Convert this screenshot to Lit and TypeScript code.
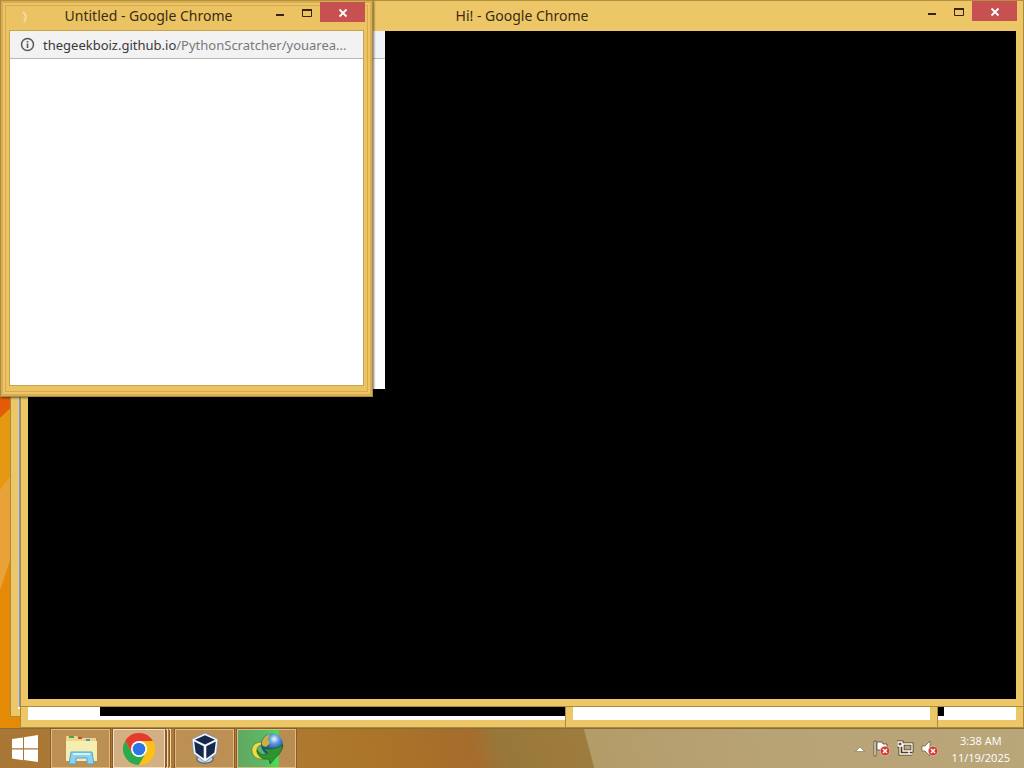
import { LitElement, html, css, svg } from "lit";
import { customElement, property } from "lit/decorators.js";

const flagX = svg`<circle cx="12" cy="11" r="4.800" fill="#cf3a34" stroke="#f3d9c8" stroke-width=".6"/><path d="M10 9l4 4m0-4l-4 4" stroke="#fff" stroke-width="1.500"/>`;

@customElement("desktop-window")
export class DesktopWindow extends LitElement {
  @property() heading = "";
  @property({ type: Boolean, reflect: true }) front = false;

  static styles = css`
    :host {
      box-sizing: border-box;
      display: flex;
      flex-direction: column;
      padding: 0 7px 7px;
      background: #edc767;
      border: 1px solid #a98a41;
      border-top-color: #b3903f;
      font-family: "Noto Sans", "Open Sans", sans-serif;
      color: #3a2c14;
    }
    :host([front]) {
      padding: 0 9px 11px;
      background: #ebc363;
    }
    .bar {
      display: flex;
      height: 30px;
      flex: none;
      position: relative;
    }
    .title {
      flex: 1;
      margin: 0;
      text-align: center;
      font-size: 14px;
      font-weight: 400;
      line-height: 29px;
      white-space: nowrap;
    }
    :host([front]) .title {
      padding: 0 96px 0 20px;
      line-height: 30px;
    }
    .controls {
      position: absolute;
      right: -1px;
      top: 0;
      display: flex;
    }
    button {
      display: grid;
      place-items: center;
      width: 27px;
      height: 20px;
      padding: 0;
      border: 0;
      background: none;
    }
    .close {
      width: 45px;
      background: #c75050;
    }
    :host([front]) .controls {
      right: -2px;
      top: 1px;
    }
    .spinner {
      position: absolute;
      left: 10px;
      top: 10px;
    }
    .body {
      flex: 1;
      min-height: 0;
      display: flex;
      flex-direction: column;
      overflow: hidden;
      background: #fff;
    }
    :host([front]) .body {
      outline: 1px solid #c9a34e;
    }
  `;

  render() {
    return html`
      ${this.heading
        ? html`<header class="bar">
            ${this.front
              ? html`<svg class="spinner" width="10" height="12"><path d="M3 1q5 4 1 10" fill="none" stroke="#f0d9b5" stroke-width="2"/></svg>`
              : ""}
            <h2 class="title">${this.heading}</h2>
            <div class="controls">
              <button aria-label="Minimize"><svg width="27" height="20"><path d="M10 13h8" stroke="#3a220c" stroke-width="2"/></svg></button>
              <button aria-label="Maximize"><svg width="27" height="20"><path d="M9.500 7v7.500h9v-7.500" fill="none" stroke="#3a220c"/><path d="M9 8h10" stroke="#3a220c" stroke-width="2"/></svg></button>
              <button class="close" aria-label="Close"><svg width="45" height="20"><path d="M19.500 7.500l7 7m0-7l-7 7" stroke="#fff" stroke-width="1.800"/></svg></button>
            </div>
          </header>`
        : ""}
      <div class="body"><slot></slot></div>
    `;
  }
}

@customElement("app-root")
export class AppRoot extends LitElement {
  static styles = css`
    :host {
      display: flex;
      flex-direction: column;
      height: 100vh;
      overflow: hidden;
      font-family: "Open Sans", sans-serif;
    }
    .desktop {
      flex: 1;
      position: relative;
      overflow: hidden;
      background: linear-gradient(115deg, #e58a06 0 50%, #e08800);
    }
    .wallpaper {
      position: absolute;
      left: 0;
      top: 0;
      width: 30px;
      height: 100%;
    }
    desktop-window {
      position: absolute;
    }
    .left { left: 10px; top: 20px; width: 500px; bottom: 11px; }
    .wide { left: 20px; right: 0; top: 20px; bottom: 0; }
    .small { left: 565px; width: 373px; height: 330px; bottom: 0; }
    .main { left: 20px; right: 0; top: 0; bottom: 21px; }
    .popup {
      left: 0;
      top: 0;
      width: 373px;
      height: 397px;
      box-shadow: 1px 1px 2px #0008, inset 0 0 0 2px #d9ae50, inset 0 0 0 4px #edc568, inset 0 0 0 5px #d6ab4e;
    }
    .backing {
      flex: 1;
      margin-bottom: 2px;
      background: #8f96a6;
      border-left: 1px solid #c8c9cc;
    }
    .hollow {
      flex: 1;
      margin: 0 72px 4px;
      background: #000;
    }
    .screen {
      flex: 1;
      background: #000;
    }
    .page {
      width: 357px;
      height: 358px;
      background: #fff;
    }
    .strip {
      height: 27px;
      background: #f0f3f8;
      border-bottom: 1px solid #b9bcc1;
    }
    .address {
      display: flex;
      align-items: center;
      gap: 8px;
      height: 27px;
      padding: 0 10px;
      background: #f2f2f3;
      border-bottom: 1px solid #b7b7b7;
      font-size: 13px;
      color: #77797c;
      white-space: nowrap;
    }
    .address b {
      font-weight: 400;
      color: #37393c;
    }
    .taskbar {
      position: relative;
      flex: none;
      box-sizing: border-box;
      display: flex;
      height: 40px;
      border-top: 1px solid #8a6c38;
      background: linear-gradient(75deg, #a97735 0, #b07c36 25%, #ac7628 35%, #a66c2c 46%, #98783a 49%, #9e7c3e 57.400%, #b49c69 57.500%, #b8a375 75%, #b9a679);
    }
    .taskbar button {
      box-sizing: border-box;
      display: grid;
      place-items: center;
      padding: 0;
      width: 59px;
      height: 39px;
      border: 1px solid #dfbb84;
      outline: 1px solid #8b5c2a;
      outline-offset: 0;
      background: #bc8f52;
    }
    .taskbar .start {
      width: 51px;
      border: 0;
      outline: 0;
      background: none;
    }
    .taskbar .active {
      background: #d3b083;
      border-color: #f3dfc4;
    }
    .taskbar .chrome {
      width: 52px;
    }
    .stack {
      display: flex;
      gap: 1px;
      margin: 0 4px 0 3px;
    }
    .stack i {
      width: 2px;
      border: solid #f0d8b8;
      border-width: 1px 1px 1px 0;
      box-sizing: border-box;
      background: #8b5c2a;
    }
    .taskbar .load {
      margin-left: 3px;
      background: linear-gradient(90deg, #62a862 0, #5bb865 45%, #45e055 70%, #b98d52 73%);
    }
    .tray {
      display: flex;
      align-items: center;
      gap: 7px;
      margin-left: auto;
      padding-right: 14px;
    }
    .clock {
      margin-left: 7px;
      text-align: center;
      color: #fff;
      font-size: 11px;
      line-height: 17px;
    }
  `;

  render() {
    return html`
      <main class="desktop">
        <svg class="wallpaper" viewBox="0 0 30 728" preserveAspectRatio="none">
          <path d="M0 380h30V390L0 418z" fill="#e45b08"/>
          <path d="M0 418L30 390V500L0 590z" fill="#e59812"/>
          <path d="M0 490L30 450V500L0 590z" fill="#e9a23a"/>
        </svg>
        <desktop-window class="left"><div class="backing"></div></desktop-window>
        <desktop-window class="wide"><div class="hollow"></div></desktop-window>
        <desktop-window class="small"></desktop-window>
        <desktop-window class="main" heading="Hi! - Google Chrome">
          <div class="screen"><div class="page"><div class="strip"></div></div></div>
        </desktop-window>
        <desktop-window class="popup" front heading="Untitled - Google Chrome">
          <div class="address">
            <svg width="15" height="15" viewBox="0 0 15 15"><circle cx="7.500" cy="7.500" r="6" fill="none" stroke="#55575a" stroke-width="1.500"/><path d="M7.500 6.500v4.500M7.500 4v1.500" stroke="#55575a" stroke-width="1.600"/></svg>
            <span><b>thegeekboiz.github.io</b>/PythonScratcher/youarea...</span>
          </div>
        </desktop-window>
      </main>
      <footer class="taskbar">
        <button class="start" aria-label="Start">
          <svg width="28" height="28" viewBox="0 0 28 28"><path d="M0 4l11-1.600v10.900H0zM12 2.200L26 0v13.300H12zM0 14.500h11v10.700L0 23.600zM12 14.500h14V27l-14-2z" fill="#fff"/></svg>
        </button>
        <button aria-label="File Explorer">
          <svg width="34" height="32" viewBox="0 0 34 32"><path d="M2 3h11l2 2h17v23H2z" fill="#ecd688"/><path d="M2 8h31v20H2z" fill="#f6eeb0"/><path d="M5 3h5v2H5z" fill="#48a65a"/><path d="M14 4h4v2h-4z" fill="#cf4939"/><path d="M22 6h4v2h-4z" fill="#4d94c8"/><path d="M7 19h21l2 12h-7v-6H12v6H5z" fill="#8fd0ee" stroke="#4ba6d6"/><path d="M9 21h17" stroke="#d5f1fc" stroke-width="2"/></svg>
        </button>
        <div class="stack">
          <button class="active chrome" aria-label="Google Chrome">
            <svg width="32" height="32" viewBox="0 0 32 32"><circle cx="16" cy="16" r="16" fill="#fbc116"/><path d="M2.140 8A16 16 0 0 1 29.860 8H16L9.070 20z" fill="#e33b2e"/><path d="M2.140 8A16 16 0 0 0 16 32L22.930 20 16 24 9.070 20z" fill="#2da94f"/><path d="M29.860 8A16 16 0 0 1 16 32L22.930 20A8 8 0 0 0 16 8z" fill="#fbc116"/><circle cx="16" cy="16" r="8" fill="#fff"/><circle cx="16" cy="16" r="6.300" fill="#2f76e5"/></svg>
          </button>
          <i></i><i></i>
        </div>
        <button aria-label="VirtualBox">
          <svg width="28" height="32" viewBox="0 0 28 32"><ellipse cx="14" cy="26" rx="9" ry="5" fill="#5d7086"/><ellipse cx="14" cy="26" rx="7.500" ry="3.500" fill="#c5d3e2"/><path d="M14 0l13 6L25.500 20.500 14 29 2.500 20.500 1 6z" fill="#f4f8fc" stroke="#7e92aa" stroke-width=".8"/><path d="M14 2.200L24 6.700 14 11.500 4 6.700zM3.200 8.600L12.700 13.200V25.500L4.600 19.500zM24.800 8.600L15.300 13.200V25.500L23.400 19.500z" fill="#14294c"/></svg>
        </button>
        <button class="load" aria-label="Download Manager">
          <svg width="34" height="32" viewBox="0 0 34 32"><defs><radialGradient id="globe" cx=".6" cy=".25"><stop offset="0" stop-color="#eef7ff"/><stop offset=".45" stop-color="#5c97dc"/><stop offset="1" stop-color="#1f5397"/></radialGradient></defs><path d="M12 9C4 9 1 14 2 19c1 6 8 9 15 6-6 0-10-3-10-8 0-3 2-5 5-5z" fill="#e8dc4a" stroke="#6d7c1e" stroke-width=".8"/><circle cx="22" cy="11.500" r="11" fill="url(#globe)"/><path d="M12 8c2-4 4-6 8-7l-2 5 2 4-4 4-3-1c-2-2-1-4-1-5z" fill="#c6b23c"/><path d="M7 17c3 5 7 6 11 3l-5-5c7 2 13 1 20-3-1 6-4 10-7 12l-6 7-1-5c-7 1-12-3-12-9z" fill="#2f9430" stroke="#15501a" stroke-width=".6"/></svg>
        </button>
        <div class="tray">
          <svg width="12" height="6" viewBox="0 0 12 6"><path d="M1.500 5.500L6 1l4.500 4.500z" fill="#fff" stroke="#6f5c38" stroke-width=".5"/></svg>
          <svg width="17" height="17" viewBox="0 0 17 17"><path d="M1 1h2v15H1zM4 2h5l1 2h4v6H4z" fill="#fff" stroke="#55452a" stroke-width=".8"/>${flagX}</svg>
          <svg width="17" height="17" viewBox="0 0 17 17"><path d="M6 4h9v7H6zM8 14h7m-3-3v3M3 6v8h5M1 2h4v4H1z" fill="none" stroke="#4d3e22" stroke-width="3"/><path d="M6 4h9v7H6zM8 14h7m-3-3v3M3 6v8h5M1 2h4v4H1z" fill="none" stroke="#fff" stroke-width="1.300"/></svg>
          <svg width="17" height="17" viewBox="0 0 17 17"><path d="M1 6h3l5-5v15l-5-5H1z" fill="#fff" stroke="#66553a" stroke-width=".7"/>${flagX}</svg>
          <div class="clock"><div>3:38 AM</div><div>11/19/2025</div></div>
        </div>
      </footer>
    `;
  }
}
